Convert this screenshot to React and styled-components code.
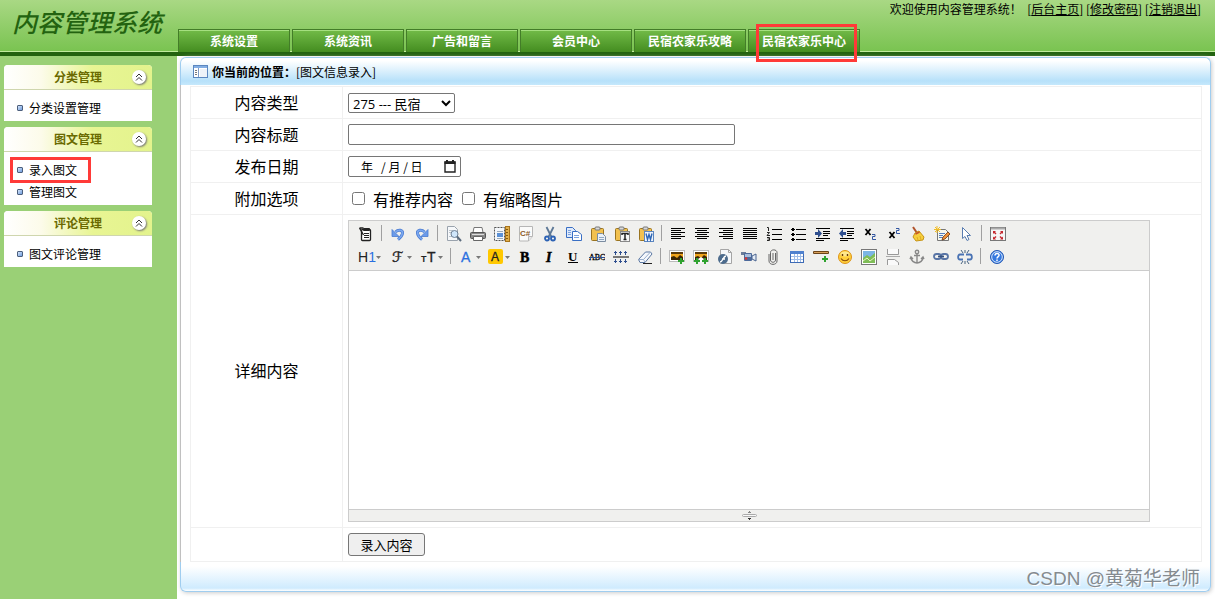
import React from 'react';
import styled, { createGlobalStyle } from 'styled-components';

const TABS = ['系统设置', '系统资讯', '广告和留言', '会员中心', '民宿农家乐攻略', '民宿农家乐中心'];

const MENUS = [
  { title: '分类管理', items: ['分类设置管理'] },
  { title: '图文管理', items: ['录入图文', '管理图文'] },
  { title: '评论管理', items: ['图文评论管理'] },
];

const lines = (rows) => rows.map(([x, y, w]) => <rect key={y} x={x} y={y} width={w} height="1" />);

const serif = { fontFamily: '"Liberation Serif", serif', fontWeight: 700 };
const sans = { fontFamily: '"Liberation Sans", sans-serif' };

const clipboard = (
  <>
    <rect x="1.5" y="2.5" width="12" height="12" rx="1" fill="#f2c14e" stroke="#9a7420" />
    <rect x="5" y="1" width="5" height="3" rx="1" fill="#d9d9d9" stroke="#777" />
  </>
);

const plus = (x, y) => (
  <path d={`M${x - 3} ${y}h6M${x} ${y - 3}v6`} stroke="#2fa32f" strokeWidth="2" />
);

const photo = (
  <>
    <rect x="0.5" y="1.5" width="15" height="11" fill="#fff" stroke="#bbb" />
    <rect x="2" y="3" width="12" height="8" fill="#f0a41c" />
    <path d="M2 3h12v2H2z" fill="#5a3a0a" />
    <path d="M2 11V8l3-1 3 2 3-3 3 2v3z" fill="#3b2503" />
  </>
);

const undoArrow = (
  <>
    <path d="M5.500 6c3-3 7.500-2 7 1.500-.5 2.500-2.500 4.500-4.500 6" fill="none" stroke="#4a7bd0" strokeWidth="3" />
    <path d="M5.500 6c3-3 7.500-2 7 1.500-.5 2.500-2.500 4.500-4.500 6" fill="none" stroke="#7ba8f0" strokeWidth="1.500" />
    <path d="M2 3.500v7h7z" fill="#6b9bea" stroke="#4a7bd0" strokeWidth="0.800" />
  </>
);

const ICONS = {
  source: (
    <g fill="none" stroke="#222">
      <rect x="3.5" y="3.5" width="9" height="11" rx="1" fill="#fff" strokeWidth="1.300" />
      <path d="M5.500 2.500h6v2h-6zM6 7.500h5M6 9.500h5M6 11.500h5" />
      <path d="M1.500 2l4 7M1.500 2h4" strokeWidth="1.400" />
    </g>
  ),
  undo: undoArrow,
  redo: <g transform="translate(16 0) scale(-1 1)">{undoArrow}</g>,
  preview: (
    <>
      <path d="M1.500.5h7l3 3v11h-10z" fill="#f6f8fa" stroke="#9aa3ad" />
      <path d="M3 4.500h4M3 6.500h3M3 10.500h3" stroke="#bac2ca" />
      <circle cx="8.500" cy="8" r="3.500" fill="#cfe6fb" stroke="#6f8196" />
      <path d="M11 10.500l4 4.500" stroke="#5b6b7d" strokeWidth="2" />
    </>
  ),
  print: (
    <>
      <path d="M4 1.500h8l1 5H3z" fill="#fff" stroke="#777" />
      <rect x="0.500" y="6.500" width="15" height="6" rx="1" fill="#8a8a8a" stroke="#555" />
      <path d="M2 8.500h12" stroke="#ddd" />
      <path d="M3.500 10.500h9v4h-9z" fill="#fff" stroke="#666" />
    </>
  ),
  template: (
    <>
      <path d="M.5 1.500h10v13H.5z" fill="#f4f7fa" stroke="#555" strokeDasharray="2 1" />
      <path d="M3 5.500h6" stroke="#9ab" />
      <rect x="3" y="7" width="6" height="4" fill="#5b91d6" />
      <path d="M3 12.500h6" stroke="#9ab" />
      <rect x="11.500" y="0.500" width="4" height="15" fill="#e2b04a" stroke="#a8741b" />
      <path d="M12 3.500h2M12 6.500h2M12 9.500h2M12 12.500h2" stroke="#86590d" />
    </>
  ),
  code: (
    <>
      <path d="M1.500.5h13v10l-4 4.500h-9z" fill="#fbfbfa" stroke="#b6b6b6" />
      <path d="M14.500 10.500h-4V15" fill="#e8e8e8" stroke="#b6b6b6" />
      <text x="2" y="9.500" fontSize="8" fill="#8c5a1e" fontWeight="700" style={sans}>C#</text>
    </>
  ),
  cut: (
    <g fill="none">
      <path d="M4.500 1l5 10M11.500 1l-5 10" stroke="#5d7896" strokeWidth="1.800" />
      <circle cx="5" cy="12.500" r="2" stroke="#2c62b4" strokeWidth="1.800" />
      <circle cx="11" cy="12.500" r="2" stroke="#2c62b4" strokeWidth="1.800" />
    </g>
  ),
  copy: (
    <g stroke="#3a6fc4">
      <path d="M.5 1.500h6l3 3v7h-9z" fill="#dfeafb" />
      <path d="M6.500 5.500h5l4 3v6h-9z" fill="#fff" />
      <path d="M2 4.500h3M2 6.500h3M2 8.500h3M8 9.500h5M8 11.500h5" stroke="#7da3de" />
    </g>
  ),
  paste: (
    <>
      {clipboard}
      <path d="M7.500 7.500h5l3 3v5h-8z" fill="#eaf1f8" stroke="#7b8ca0" />
      <path d="M9 11.500h5M9 13.500h5" stroke="#8fa8c4" />
    </>
  ),
  plainpaste: (
    <>
      {clipboard}
      <rect x="6.500" y="5.500" width="9" height="10" fill="#f7f7f7" stroke="#888" />
      <path d="M8 9V7.500h6V9M11 7v7M9.500 13.500h3" fill="none" stroke="#222" strokeWidth="1.500" />
    </>
  ),
  wordpaste: (
    <>
      {clipboard}
      <rect x="6.500" y="5.500" width="9" height="10" fill="#eef4fc" stroke="#5c86bf" />
      <path d="M8 7.500l1.500 6 1.500-5 1.500 5 1.500-6" fill="none" stroke="#2d66b5" strokeWidth="1.400" />
    </>
  ),
  left: <g>{lines([[1, 2, 14], [1, 4, 10], [1, 6, 14], [1, 8, 10], [1, 10, 14], [1, 12, 10]])}</g>,
  center: <g>{lines([[1, 2, 14], [3, 4, 10], [1, 6, 14], [3, 8, 10], [1, 10, 14], [3, 12, 10]])}</g>,
  right: <g>{lines([[1, 2, 14], [5, 4, 10], [1, 6, 14], [5, 8, 10], [1, 10, 14], [5, 12, 10]])}</g>,
  full: <g>{lines([[1, 2, 14], [1, 4, 14], [1, 6, 14], [1, 8, 14], [1, 10, 14], [1, 12, 14]])}</g>,
  ol: (
    <>
      {lines([[6, 3, 10], [6, 8, 10], [6, 13, 10]])}
      <path d="M1 1.500h1.500V5M1 6.500h2.500L1 9.500h3M1 11.500h2.500v3H1M1.500 13h2" fill="none" stroke="#222" />
    </>
  ),
  ul: (
    <>
      {lines([[6, 3, 10], [6, 8, 10], [6, 13, 10]])}
      <path d="M2 2h2v1h1v1H4v1H2V4H1V3h1zM2 7h2v1h1v1H4v1H2V9H1V8h1zM2 12h2v1h1v1H4v1H2v-1H1v-1h1z" />
    </>
  ),
  indent: (
    <>
      {lines([[2, 2, 14], [9, 5, 7], [9, 7, 7], [9, 9, 5], [2, 12, 14], [2, 14, 8]])}
      <path d="M1 6h3V3l4 4.500L4 12V9H1z" fill="#2f4f8f" />
    </>
  ),
  outdent: (
    <>
      {lines([[2, 2, 14], [9, 5, 7], [9, 7, 7], [9, 9, 5], [2, 12, 14], [2, 14, 8]])}
      <path d="M8 6H5V3L1 7.500 5 12V9h3z" fill="#2f4f8f" />
    </>
  ),
  sub: (
    <>
      <path d="M3.500 3l5 6M8.500 3l-5 6" stroke="#000" strokeWidth="1.800" />
      <path d="M10 8.500h3v2h-2.500v3H14" fill="none" stroke="#3356a0" />
    </>
  ),
  sup: (
    <>
      <path d="M3.500 6l5 6M8.500 6l-5 6" stroke="#000" strokeWidth="1.800" />
      <path d="M10 2.500h3v2h-2.500v3H14" fill="none" stroke="#3356a0" />
    </>
  ),
  clear: (
    <>
      <path d="M3 1l4 6" stroke="#b0522b" strokeWidth="2" />
      <path d="M5 7l4-2 5 6-1 3-7 1-3-4z" fill="#f6cf3c" stroke="#c79416" />
      <path d="M5.500 8l4-2" stroke="#c5502b" strokeWidth="1.500" />
      <path d="M7 11l1 3M10 10l1 4" stroke="#e0ac24" />
    </>
  ),
  quick: (
    <>
      <path d="M3.500 3.500h8l3 3v8h-11z" fill="#f8f8ee" stroke="#777" />
      <path d="M5 7.500h6M5 9.500h4M5 11.500h5" stroke="#557fc1" />
      <path d="M3 0v7M0 3.500h7M1 1l5 5M6 1L1 6" stroke="#f0bd28" />
      <path d="M8 14l1-3 5-5 2 2-5 5z" fill="#f0913a" stroke="#6d3a13" strokeWidth="0.800" />
    </>
  ),
  select: <path d="M4.500 1.500v11l2.500-2 2 4 2-1-2-4h3.500z" fill="#fff" stroke="#5a7db1" />,
  fullscreen: (
    <>
      <rect x="0.500" y="1.500" width="15" height="13" fill="#f6f6f6" stroke="#777" />
      <path d="M1 2.500h14" stroke="#aaa" strokeWidth="2" />
      <path d="M3 5h3l-1 1 1.500 1.500-1 1L4 7 3 8zM13 5h-3l1 1-1.500 1.500 1 1L12 7l1 1zM3 13.500h3l-1-1L6.500 11l-1-1L4 11.500l-1-1zM13 13.500h-3l1-1L9.500 11l1-1 1.500 1.500 1-1z" fill="#c5282f" />
    </>
  ),
  bold: <text x="3" y="13" fontSize="14" stroke="#000" strokeWidth="0.500" style={serif}>B</text>,
  italic: <text x="5" y="13" fontSize="14" stroke="#000" strokeWidth="0.500" fontStyle="italic" style={serif}>I</text>,
  underline: (
    <>
      <text x="3" y="12" fontSize="13" style={serif}>U</text>
      <rect x="3" y="13" width="10" height="1" />
    </>
  ),
  strike: (
    <>
      <text x="0" y="11" fontSize="8" stroke="#000" strokeWidth="0.300" style={{ ...serif, fontWeight: 400 }}>ABC</text>
      <rect x="0" y="8" width="16" height="1" fill="#2f4f8f" />
    </>
  ),
  lineheight: (
    <>
      <rect x="0" y="7" width="16" height="2" fill="#777" />
      <path d="M2.500 2v4M7.500 2v4M12.500 2v4M2.500 10v4M7.500 10v4M12.500 10v4M1 3.500h3M6 3.500h3M11 3.500h3M1 12.500h3M6 12.500h3M11 12.500h3" stroke="#2f4f8f" />
    </>
  ),
  eraser: (
    <>
      <path d="M1.500 10.500l7-7.500h5l1.500 2-7 8.500h-5z" fill="#f5f8fc" stroke="#5c78a3" />
      <path d="M1.500 10.500h5L8 13M6.500 10.500l7-7.500" fill="none" stroke="#9aafcc" />
      <path d="M6 14.500h9" stroke="#222" />
    </>
  ),
  image: <>{photo}{plus(12, 12)}</>,
  multiimage: <>{photo}<path d="M5 10l3-2 3 2-3 4z" fill="#fff" />{plus(4, 12)}{plus(12, 12)}</>,
  flash: (
    <>
      <path d="M3.500.5h8l3 3v11h-11z" fill="#f6f8fa" stroke="#a5a5a5" />
      <path d="M11.500.5v3h3" fill="none" stroke="#a5a5a5" />
      <circle cx="6" cy="10" r="5" fill="#4d6c8d" />
      <path d="M9 7c-3 0-3 6-6 6M5 10h3" fill="none" stroke="#fff" strokeWidth="1.500" />
    </>
  ),
  media: (
    <>
      <rect x="0" y="3" width="5" height="3" fill="#6b7d9a" />
      <rect x="3" y="4" width="8" height="8" rx="1" fill="#4d6a9b" />
      <rect x="4" y="5" width="6" height="3" fill="#a8bedd" />
      <circle cx="5" cy="9.500" r="1.300" fill="#dd3434" />
      <path d="M11 7l4-2v7l-4-2z" fill="#e4ecf6" stroke="#48638f" />
    </>
  ),
  file: <path d="M10.500 4v7c0 3-5 3-5 0V3.500c0-3.500 6.500-3.500 6.500 0V12c0 4.500-8 4.500-8 0V5M8 4v7" fill="none" stroke="#666" />,
  table: (
    <>
      <rect x="1.500" y="2.500" width="13" height="11" fill="#fff" stroke="#3e6bb5" />
      <rect x="1" y="2" width="14" height="3" fill="#4f81ce" />
      <path d="M2 7.500h12M2 10.500h12M5.500 5v8M8.500 5v8M11.500 5v8" stroke="#9fbde8" />
    </>
  ),
  hr: (
    <>
      <rect x="0" y="2" width="16" height="3" rx="1" fill="#6d4519" />
      <rect x="1" y="3" width="14" height="1" fill="#d8a05b" />
      {plus(12, 10)}
    </>
  ),
  emoticons: (
    <>
      <circle cx="8" cy="8" r="6.500" fill="#ffcf3b" stroke="#dd9418" />
      <ellipse cx="8" cy="5" rx="4.500" ry="2.500" fill="#ffe88c" />
      <path d="M5.500 5v2M10.500 5v2" stroke="#6b3c06" strokeWidth="1.400" />
      <path d="M4 9.500c2 3 6 3 8 0" fill="none" stroke="#8b4c0a" strokeWidth="1.200" />
    </>
  ),
  map: (
    <>
      <rect x="0.500" y="0.500" width="15" height="15" fill="#fff" stroke="#777" />
      <rect x="2" y="2" width="12" height="12" fill="#7cb5e4" />
      <path d="M2 9l4-3 3 2 5-4v10H2z" fill="#7fbd57" />
      <path d="M2 12l4-3 3 3 5-4" fill="none" stroke="#e7f3c3" />
    </>
  ),
  pagebreak: (
    <g fill="#fafafa" stroke="#999">
      <path d="M2.500 0v5.500h11V0M2.500 16v-5.500h7l4 3V16" />
      <path d="M1 7.500h14" stroke="#aaa" />
    </g>
  ),
  anchor: (
    <g fill="none" stroke="#888" strokeWidth="1.400">
      <circle cx="8" cy="3" r="1.700" />
      <path d="M8 5v9M5 6.500h6M2 8.500c0 3 3 5.500 6 5.500s6-2.500 6-5.500M1 10l1-2 2 2M15 10l-1-2-2 2" />
    </g>
  ),
  link: (
    <g fill="none" stroke="#5874a5" strokeWidth="1.800">
      <rect x="1" y="5" width="7" height="5" rx="2.500" />
      <rect x="8" y="5" width="7" height="5" rx="2.500" />
      <path d="M5 7.500h6" stroke="#35507e" />
    </g>
  ),
  unlink: (
    <g fill="none" stroke="#4a73b4">
      <path d="M7 5.500H3c-2.500 0-2.500 5 0 5h3M9 5.500h4c2.500 0 2.500 5 0 5h-3" strokeWidth="1.800" />
      <path d="M8 1v3M4 1l2 3M12 1l-2 3M8 12v3M4 15l2-3M12 15l-2-3" stroke="#45617f" />
    </g>
  ),
  help: (
    <>
      <circle cx="8" cy="8" r="6.500" fill="#3478df" stroke="#2358b3" />
      <circle cx="8" cy="8" r="5.300" fill="none" stroke="#d5e5fb" />
      <path d="M6 6.500c0-3 4.500-2.500 4 0 0 1-2 1.500-2 3M8 10.500V12" fill="none" stroke="#fff" strokeWidth="1.500" />
    </>
  ),
};

const ROW_ONE = [
  'source', '|', 'undo', 'redo', '|', 'preview', 'print', 'template', 'code', 'cut', 'copy', 'paste',
  'plainpaste', 'wordpaste', '|', 'left', 'center', 'right', 'full', 'ol', 'ul', 'indent', 'outdent',
  'sub', 'sup', 'clear', 'quick', 'select', '|', 'fullscreen',
];

const ROW_TWO = [
  'bold', 'italic', 'underline', 'strike', 'lineheight', 'eraser', '|', 'image', 'multiimage', 'flash',
  'media', 'file', 'table', 'hr', 'emoticons', 'map', 'pagebreak', 'anchor', 'link', 'unlink', '|', 'help',
];

function Tools({ names }) {
  return names.map((name, i) =>
    name === '|' ? (
      <Divider key={i} />
    ) : (
      <Tool key={i} type="button" aria-label={name}>
        <svg width="16" height="16" viewBox="0 0 16 16">
          {ICONS[name]}
        </svg>
      </Tool>
    )
  );
}

function DropTool({ label, width, children }) {
  return (
    <Tool type="button" aria-label={label} $width={width}>
      <svg width="24" height="16" viewBox="0 0 24 16">
        {children}
        <path d="M18 7h5l-2.500 3z" fill="#777" />
      </svg>
    </Tool>
  );
}

function Editor() {
  return (
    <EditorBox>
      <Toolbar>
        <ToolRow>
          <Tools names={ROW_ONE} />
        </ToolRow>
        <ToolRow>
          <DropTool label="heading" width={31}>
            <text x="0" y="13" fontSize="14" fill="#222" style={sans}>H<tspan fill="#2a6fe0">1</tspan></text>
          </DropTool>
          <DropTool label="font" width={31}>
            <text x="3" y="13" fontSize="14" fill="#222" stroke="#222" strokeWidth="0.400" fontFamily="'DejaVu Sans', serif">ℱ</text>
          </DropTool>
          <DropTool label="size" width={31}>
            <text x="1" y="13" fontSize="9" fontWeight="700" fill="#222" style={sans}>T</text>
            <text x="7" y="13" fontSize="14" fill="#222" stroke="#222" strokeWidth="0.300" style={sans}>T</text>
          </DropTool>
          <Divider />
          <DropTool label="color" width={29}>
            <text x="3" y="13" fontSize="14" fill="#2a6fe0" stroke="#2a6fe0" strokeWidth="0.300" style={sans}>A</text>
          </DropTool>
          <DropTool label="background" width={29}>
            <rect x="1" y="0" width="15" height="15" rx="2" fill="#ffc800" />
            <text x="4" y="12" fontSize="12" fill="#222" stroke="#222" strokeWidth="0.300" style={sans}>A</text>
          </DropTool>
          <Tools names={ROW_TWO} />
        </ToolRow>
      </Toolbar>
      <Content aria-label="详细内容" />
      <StatusBar>
        <svg width="15" height="9" viewBox="0 0 15 9">
          <rect x="0.500" y="3.500" width="14" height="2" rx="1" fill="#f8f8f8" stroke="#aaa" />
          <path d="M7 0h1v1h1v1H6V1h1z" fill="#888" />
          <path d="M6 7h3v1H8v1H7V8H6z" fill="#333" />
        </svg>
      </StatusBar>
    </EditorBox>
  );
}

function App() {
  return (
    <Page>
      <GlobalStyle />
      <Header>
        <Logo>内容管理系统</Logo>
        <HeaderMain>
          <Welcome>
            欢迎使用内容管理系统！&nbsp; [<a href="#home">后台主页</a>] [<a href="#password">修改密码</a>] [<a href="#logout">注销退出</a>]
          </Welcome>
          <Nav>
            {TABS.map((tab) => (
              <Tab key={tab} href="#tab">
                {tab}
                {tab === '民宿农家乐中心' && <TabMark />}
              </Tab>
            ))}
          </Nav>
        </HeaderMain>
      </Header>
      <Body>
        <Sidebar>
          {MENUS.map(({ title, items }) => (
            <Menu key={title}>
              <MenuTitle>
                {title}
                <Collapse type="button" aria-label="收起">
                  <svg width="8" height="8" viewBox="0 0 8 8" fill="none" stroke="#333">
                    <path d="M1 4l3-3 3 3M1 7.500l3-3 3 3" />
                  </svg>
                </Collapse>
              </MenuTitle>
              <MenuList>
                {items.map((item) => (
                  <MenuItem key={item}>
                    <Bullet />
                    <a href="#item">{item}</a>
                    {item === '录入图文' && <ItemMark />}
                  </MenuItem>
                ))}
              </MenuList>
            </Menu>
          ))}
        </Sidebar>
        <Panel>
          <PanelTop>
            <svg width="15" height="13" viewBox="0 0 15 13">
              <rect x="0.500" y="0.500" width="14" height="12" fill="#fff" stroke="#5b87c0" />
              <path d="M1 1h13v2H1z" fill="#82aee4" />
              <path d="M5.500 3v9" stroke="#7e9cc5" />
              <path d="M2 5.500h2M2 7.500h2M2 9.500h2" stroke="#777" />
              <path d="M7 4h7v8H7z" fill="#edf2f8" />
            </svg>
            <span><b>你当前的位置：</b>[图文信息录入]</span>
          </PanelTop>
          <PanelBody>
            <FormTable>
              <tbody>
                <tr>
                  <LabelCell><label htmlFor="type">内容类型</label></LabelCell>
                  <td>
                    <Select id="type">
                      <option>275 --- 民宿</option>
                    </Select>
                  </td>
                </tr>
                <tr>
                  <LabelCell><label htmlFor="title">内容标题</label></LabelCell>
                  <td><TitleInput id="title" type="text" /></td>
                </tr>
                <tr>
                  <LabelCell><label htmlFor="date">发布日期</label></LabelCell>
                  <td>
                    <DateField>
                      <input id="date" type="text" defaultValue={'年\u00a0\u00a0\u00a0/\u00a0月\u00a0/\u00a0日'} />
                      <svg width="12" height="13" viewBox="0 0 12 13">
                        <path d="M1 2h10v10H1z" fill="none" stroke="#222" strokeWidth="1.400" />
                        <path d="M0.500 1.500h11V4H.5zM2 0h2v2H2zM8 0h2v2H8z" fill="#222" />
                      </svg>
                    </DateField>
                  </td>
                </tr>
                <tr>
                  <LabelCell>附加选项</LabelCell>
                  <td>
                    <Checks>
                      <label><input type="checkbox" />有推荐内容</label>
                      <label><input type="checkbox" />有缩略图片</label>
                    </Checks>
                  </td>
                </tr>
                <tr>
                  <LabelCell>详细内容</LabelCell>
                  <td><Editor /></td>
                </tr>
                <tr>
                  <LabelCell />
                  <SubmitCell><SubmitButton type="button">录入内容</SubmitButton></SubmitCell>
                </tr>
              </tbody>
            </FormTable>
          </PanelBody>
          <PanelBottom />
          <Watermark>CSDN @黄菊华老师</Watermark>
        </Panel>
      </Body>
    </Page>
  );
}

const GlobalStyle = createGlobalStyle`
  * {
    box-sizing: border-box;
  }

  body {
    margin: 0;
    background-color: #fff;
    color: #000;
    font-family: 'Noto Sans CJK SC', sans-serif;
    font-size: 12px;
  }

  a {
    color: inherit;
  }

  svg {
    display: block;
  }
`;
const Page = styled.div`
  display: flex;
  flex-direction: column;
  min-height: 100vh;
`;
const Header = styled.header`
  display: flex;
  height: 56px;
  background: linear-gradient(#a9d884, #79c350);
  border-bottom: 4px solid #236310;
  box-shadow: inset 0 -1px #c0eb9d;
`;
const Logo = styled.h1`
  width: 178px;
  flex-shrink: 0;
  margin: 0;
  padding-left: 12px;
  font-size: 25px;
  line-height: 42px;
  font-style: italic;
  font-weight: 500;
  color: #236310;
  white-space: nowrap;
`;
const HeaderMain = styled.div`
  display: flex;
  flex: 1;
  flex-direction: column;
  justify-content: space-between;
`;
const Welcome = styled.div`
  padding-right: 14px;
  line-height: 18px;
  text-align: right;
`;
const Nav = styled.nav`
  display: flex;
  gap: 2px;
`;
const Tab = styled.a`
  position: relative;
  width: 112px;
  height: 23px;
  background: linear-gradient(#72bb48, #448d20);
  border: 1px solid #437d28;
  border-bottom: none;
  box-shadow: inset 0 1px #a5df80;
  color: #fff;
  font-weight: 700;
  line-height: 21px;
  text-align: center;
  text-decoration: none;
`;
const Mark = styled.span`
  position: absolute;
  z-index: 1;
  border: 3px solid #ff3a38;
  pointer-events: none;
`;
const TabMark = styled(Mark)`
  top: -6px;
  left: 7px;
  width: 101px;
  height: 38px;
`;
const Body = styled.div`
  display: grid;
  flex: 1;
  grid-template-columns: 177px 1fr;
`;
const Sidebar = styled.aside`
  display: flex;
  flex-direction: column;
  gap: 6px;
  padding: 9px 25px 0 4px;
  background-color: #9ad076;
`;
const Menu = styled.section`
  background-color: #fff;
  border-radius: 4px 4px 0 0;
`;
const MenuTitle = styled.h2`
  position: relative;
  height: 25px;
  margin: 0;
  border-bottom: 1px solid #cfd6ae;
  border-radius: 4px 4px 0 0;
  background: linear-gradient(90deg, #fff, #fcfbea 25%, #e8f593 60%, #e3f38d);
  color: #6a6a00;
  font-size: 12px;
  line-height: 23px;
  text-align: center;
`;
const Collapse = styled.button`
  position: absolute;
  top: 6px;
  right: 7px;
  display: flex;
  align-items: center;
  justify-content: center;
  width: 12px;
  height: 12px;
  padding: 0;
  border: none;
  border-radius: 50%;
  background-color: #fff;
  box-shadow: 0 0 0 1px #fff, 1px 1px 2px 1px #777;
`;
const MenuList = styled.ul`
  margin: 0;
  padding: 7px 0 2px;
  list-style: none;
`;
const MenuItem = styled.li`
  position: relative;
  display: flex;
  align-items: center;
  gap: 6px;
  height: 22px;
  padding-left: 13px;

  a {
    padding-bottom: 2px;
    text-decoration: none;
  }
`;
const Bullet = styled.span`
  width: 6px;
  height: 6px;
  border: 1px solid #4c5f7d;
  border-radius: 1px;
  background: linear-gradient(135deg, #d7e6fa, #6f9cdd);
`;
const ItemMark = styled(Mark)`
  top: -2px;
  left: 6px;
  width: 81px;
  height: 26px;
`;
const Panel = styled.main`
  position: relative;
  align-self: start;
  margin: 1px 4px 7px 3px;
  border-radius: 6px;
  box-shadow: 1px 1px 4px #ccc;
`;
const PanelTop = styled.div`
  display: flex;
  align-items: center;
  gap: 4px;
  height: 28px;
  padding-left: 12px;
  border: 1px solid #a0cdef;
  border-bottom: none;
  border-radius: 6px 6px 0 0;
  background: linear-gradient(#fff 10%, #b7e1fa 85%, #c5e8fc);
`;
const PanelBody = styled.div`
  padding: 1px 8px 0 9px;
  border-left: 1px solid #c0c0c0;
  border-right: 1px solid #a0cdef;
  background-color: #fff;
`;
const PanelBottom = styled.div`
  height: 30px;
  border: 1px solid #a0cdef;
  border-top: none;
  border-radius: 0 0 6px 6px;
  background: linear-gradient(#fff 15%, #cfebfe 90%, #fff);
`;
const FormTable = styled.table`
  width: 100%;
  border-collapse: collapse;
  font-size: 16px;

  tr {
    height: 32px;
  }

  td {
    padding: 0 5px;
    border: 1px solid #f0f0f0;
  }

  td:first-child {
    padding-bottom: 2px;
  }
`;
const LabelCell = styled.td`
  width: 152px;
  text-align: center;
`;
const SubmitCell = styled.td`
  height: 34px;
`;
const Select = styled.select`
  display: block;
  width: 107px;
  height: 20px;
  padding: 0;
  border: 1px solid #767676;
  border-radius: 2px;
  background-color: #fff;
  font-family: 'Open Sans', 'Noto Sans CJK SC', sans-serif;
  font-size: 13px;
`;
const TitleInput = styled.input`
  display: block;
  width: 387px;
  height: 21px;
  border: 1px solid #767676;
  border-radius: 2px;
`;
const DateField = styled.div`
  display: flex;
  align-items: center;
  width: 113px;
  height: 21px;
  padding: 0 4px 0 12px;
  border: 1px solid #767676;
  border-radius: 2px;

  input {
    flex: 1;
    min-width: 0;
    height: 19px;
    padding: 0;
    border: none;
    outline: none;
    font-family: 'Noto Sans CJK SC', sans-serif;
    font-size: 12px;
  }
`;
const Checks = styled.div`
  display: flex;
  gap: 9px;
  padding-left: 4px;

  label {
    display: flex;
    align-items: center;
    gap: 8px;
    line-height: 24px;
  }

  input {
    width: 13px;
    height: 13px;
    margin: 0;
  }
`;
const EditorBox = styled.div`
  display: flex;
  flex-direction: column;
  max-width: 802px;
  margin: 5px 0;
  border: 1px solid #ccc;
`;
const Toolbar = styled.div`
  padding: 1px 5px 2px;
  border-bottom: 1px solid #ccc;
  background-color: #f0f0ee;
`;
const ToolRow = styled.div`
  display: flex;
  height: 23px;
`;
const Tool = styled.button`
  display: flex;
  align-items: center;
  justify-content: center;
  flex-shrink: 0;
  width: ${({ $width }) => $width || 24}px;
  padding: 0;
  border: none;
  background: none;
`;
const Divider = styled.span`
  width: 1px;
  height: 16px;
  margin: 3px 4px 0 3px;
  background-color: #a0a0a0;
`;
const Content = styled.textarea`
  display: block;
  width: 100%;
  height: 238px;
  padding: 5px;
  border: none;
  outline: none;
  resize: none;
`;
const StatusBar = styled.div`
  display: flex;
  align-items: center;
  justify-content: center;
  height: 12px;
  border-top: 1px solid #ccc;
  background-color: #f0f0ee;
`;
const SubmitButton = styled.button`
  display: block;
  width: 77px;
  height: 23px;
  padding: 0;
  border: 1px solid #767676;
  border-radius: 3px;
  background-color: #efefef;
  font-family: 'Noto Sans CJK SC', sans-serif;
  font-size: 13px;
`;
const Watermark = styled.div`
  position: absolute;
  right: 11px;
  bottom: 0;
  color: #858b90;
  font-family: 'Liberation Sans', 'Noto Sans CJK SC', sans-serif;
  font-size: 19px;
  line-height: 26px;
  text-shadow: 1px 1px #fff;
`;

export default App;
